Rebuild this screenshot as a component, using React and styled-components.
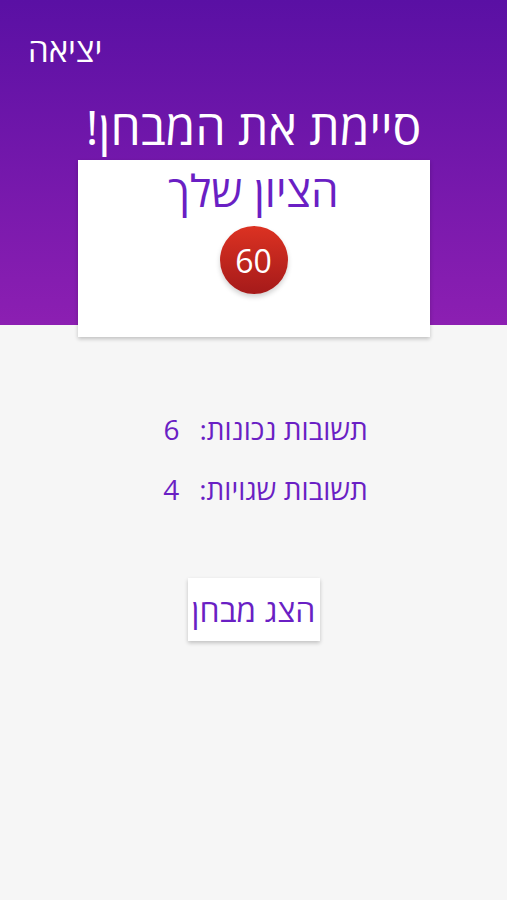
import React from "react";
import styled, { createGlobalStyle } from "styled-components";

const headerTop = "#5a10a4";
const headerBottom = "#8c1fb2";
const purple = "#6a1fc4";
const pageBg = "#f6f6f6";

const GlobalStyle = createGlobalStyle`
  html, body {
    margin: 0;
    padding: 0;
    background: ${pageBg};
  }
  body {
    font-family: "Open Sans", "DejaVu Sans", "Liberation Sans", sans-serif;
  }
`;

export default function App() {
  const correct = 6;
  const wrong = 4;
  const score = Math.round((correct / (correct + wrong)) * 100);

  return (
    <>
      <GlobalStyle />
      <Page dir="rtl">
        <TopBar>
          <ExitLink>יציאה</ExitLink>
        </TopBar>

        <Title>סיימת את המבחן!</Title>

        <ScoreCard>
          <CardTitle>הציון שלך</CardTitle>
          <ScoreBadge>{score}</ScoreBadge>
        </ScoreCard>

        <Stats>
          <StatRow>
            <span>תשובות נכונות:</span>
            <span>{correct}</span>
          </StatRow>
          <StatRow>
            <span>תשובות שגויות:</span>
            <span>{wrong}</span>
          </StatRow>
        </Stats>

        <ShowButton>הצג מבחן</ShowButton>
      </Page>
    </>
  );
}

const Page = styled.main`
  min-height: 900px;
  display: flex;
  flex-direction: column;
  align-items: center;
  background: linear-gradient(180deg, ${headerTop} 0%, ${headerBottom} 100%)
      top / 100% 325px no-repeat,
    ${pageBg};
`;

const TopBar = styled.div`
  align-self: stretch;
  display: flex;
  justify-content: flex-end;
  padding: 29px 28px 0;
  height: 42px;
`;

const ExitLink = styled.span`
  color: #fff;
  font-size: 33px;
  line-height: 42px;
  cursor: pointer;
`;

const Title = styled.h1`
  margin: 28px 0 0;
  color: #fff;
  font-size: 48px;
  font-weight: 400;
  line-height: 56px;
`;

const ScoreCard = styled.section`
  margin-top: 5px;
  width: 352px;
  height: 177px;
  box-sizing: border-box;
  background: #fff;
  box-shadow: 0 2px 4px rgba(0, 0, 0, 0.22);
  display: flex;
  flex-direction: column;
  align-items: center;
`;

const CardTitle = styled.h2`
  margin: 6px 0 0;
  color: ${purple};
  font-size: 44px;
  font-weight: 400;
  line-height: 48px;
`;

const ScoreBadge = styled.div`
  margin-top: 12px;
  width: 68px;
  height: 68px;
  border-radius: 50%;
  background: linear-gradient(180deg, #dc3222 0%, #a51a1a 100%);
  box-shadow: 0 3px 5px rgba(0, 0, 0, 0.18);
  color: #fff;
  font-size: 32px;
  display: flex;
  align-items: center;
  justify-content: center;
`;

const Stats = styled.div`
  margin-top: 74px;
  display: flex;
  flex-direction: column;
  gap: 24px;
  padding-left: 24px;
`;

const StatRow = styled.div`
  display: flex;
  gap: 20px;
  color: ${purple};
  font-size: 28px;
  line-height: 36px;
`;

const ShowButton = styled.button`
  margin-top: 71px;
  width: 132px;
  height: 63px;
  border: none;
  background: #fff;
  box-shadow: 0 2px 4px rgba(0, 0, 0, 0.22);
  color: ${purple};
  font-family: inherit;
  font-size: 32px;
  padding: 0;
  cursor: pointer;
`;
